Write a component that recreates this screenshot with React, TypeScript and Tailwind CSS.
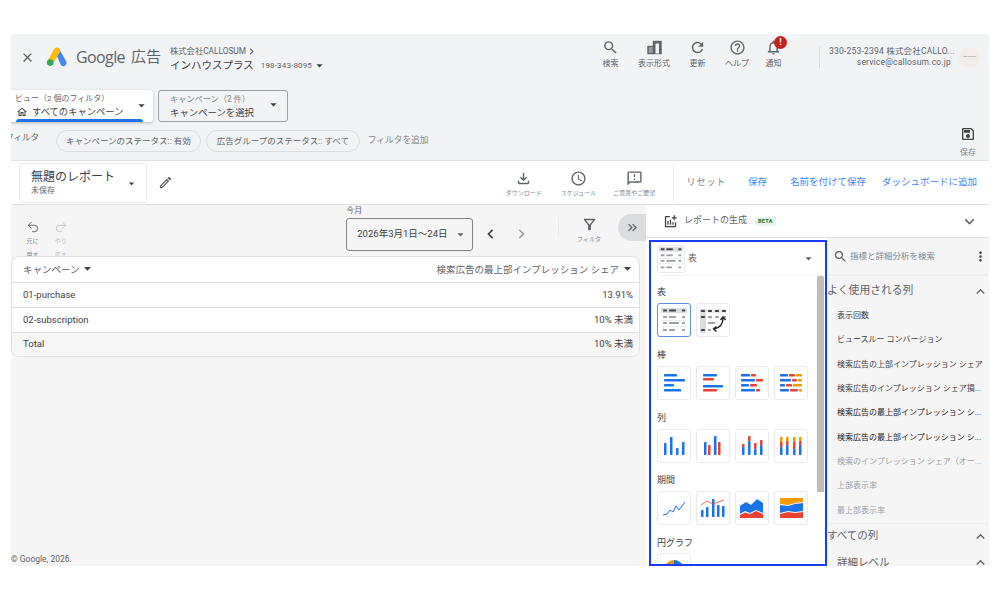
import type { ReactNode } from "react";
import { Undo2, Redo2 } from "lucide-react";
import {
  MdClose,
  MdSearch,
  MdRefresh,
  MdHelpOutline,
  MdOutlineNotifications,
  MdOutlineSave,
  MdArrowDropDown,
  MdOutlineEdit,
  MdOutlineFileDownload,
  MdOutlineSchedule,
  MdOutlineFeedback,
  MdOutlineFilterAlt,
  MdChevronLeft,
  MdChevronRight,
  MdKeyboardDoubleArrowRight,
  MdKeyboardArrowDown,
  MdKeyboardArrowUp,
  MdMoreVert,
  MdOutlineHome,
  MdOutlineAddchart,
} from "react-icons/md";

const B = "#1a73e8";
const R = "#ea4335";
const O = "#f29900";
const G = "#9aa0a6";
const D = "#3c4043";

type Bar = [number, number, number, number, string];

const Logo = () => (
  <svg width="22" height="20" viewBox="0 0 22 20">
    <path d="M8 2.5 L13.5 2.5 L20.5 15 A3.2 3.2 0 0 1 15 18 Z" fill="#4285f4" />
    <path d="M8.2 2 A3.2 3.2 0 0 1 13.8 5 L7 17 L1.6 14 Z" fill="#fbbc04" />
    <circle cx="4.2" cy="15.6" r="3.3" fill="#34a853" />
  </svg>
);

const ViewIcon = () => (
  <svg width="15" height="15" viewBox="0 0 15 15" fill="none" stroke="#5f6368" strokeWidth="1.4">
    <rect x="1" y="6.5" width="5.5" height="7" fill="#9aa0a6" />
    <rect x="6.5" y="1.5" width="7.5" height="12" fill="#5f6368" />
    <rect x="8.5" y="3.5" width="3.5" height="10" fill="#f1f3f4" stroke="none" />
  </svg>
);

const TopAction = ({ icon, label, cls }: { icon: ReactNode; label: string; cls?: string }) => (
  <div className={`flex flex-col items-center text-[8px] leading-[10px] text-[#5f6368] ${cls ?? ""}`}>
    <div className="h-[18px] flex items-center justify-center">{icon}</div>
    <span className="mt-[3px] whitespace-nowrap">{label}</span>
  </div>
);

const TinyAction = ({ icon, label, cls }: { icon: ReactNode; label: string; cls?: string }) => (
  <div className={`flex flex-col items-center text-[6px] leading-[8px] text-[#80868b] ${cls ?? ""}`}>
    <div className="mt-[1px]">{icon}</div>
    <span className="mt-[2px] whitespace-nowrap">{label}</span>
  </div>
);

const Thumb = ({ bars, children, cls }: { bars?: Bar[]; children?: ReactNode; cls?: string }) => (
  <div className={`w-[34px] h-[34px] shrink-0 rounded-[3px] border bg-white ${cls ?? "border-[#e8eaed]"}`}>
    <svg width="32" height="32" viewBox="0 0 32 32">
      {bars?.map((b, i) => (
        <rect key={i} x={b[0]} y={b[1]} width={b[2]} height={b[3]} fill={b[4]} rx="0.4" />
      ))}
      {children}
    </svg>
  </div>
);

const tableBars: Bar[] = [
  [3, 4, 26, 5, "#dadce0"],
  [5, 5.5, 4, 2, D],
  [11, 5.5, 7, 2, D],
  [24, 5.5, 3, 2, D],
  [5, 12, 4, 2, G],
  [11, 12, 7, 2, G],
  [24, 12, 3, 2, G],
  [3, 16, 26, 0.6, "#dadce0"],
  [5, 18, 4, 2, G],
  [11, 18, 10, 2, G],
  [24, 18, 3, 2, G],
  [3, 22, 26, 0.6, "#dadce0"],
  [5, 25, 4, 2, G],
  [11, 25, 6, 2, G],
  [24, 25, 3, 2, G],
];

const pivotBars: Bar[] = [
  [3, 5, 26, 4, "#e8eaed"],
  [3, 5, 6, 24, "#dadce0"],
  [4, 6, 4, 2, D],
  [11, 6, 4, 2, D],
  [18, 6, 4, 2, D],
  [25, 6, 4, 2, D],
  [4, 12, 4, 2, D],
  [11, 12, 4, 2, G],
  [18, 12, 4, 2, G],
  [25, 12, 4, 2, G],
  [11, 18, 7, 2, G],
  [4, 25, 4, 2, D],
  [11, 25, 3, 2, G],
];

const barThumbs: Bar[][] = [
  [
    [6, 7, 13, 2.5, B],
    [6, 12, 21, 2.5, B],
    [6, 17, 10, 2.5, B],
    [6, 22, 17, 2.5, B],
  ],
  [
    [6, 7, 14, 2.5, B],
    [6, 11, 11, 2.5, R],
    [6, 18, 20, 2.5, B],
    [6, 22, 14, 2.5, R],
  ],
  [
    [5, 7, 9, 2.5, B],
    [15, 7, 5, 2.5, R],
    [5, 12, 14, 2.5, B],
    [20, 12, 7, 2.5, R],
    [5, 17, 8, 2.5, B],
    [14, 17, 7, 2.5, R],
    [5, 22, 14, 2.5, B],
    [20, 22, 4, 2.5, R],
  ],
  [
    [5, 7, 8, 2.5, B],
    [14, 7, 6, 2.5, R],
    [21, 7, 6, 2.5, O],
    [5, 12, 11, 2.5, B],
    [17, 12, 5, 2.5, R],
    [23, 12, 4, 2.5, O],
    [5, 17, 5, 2.5, B],
    [11, 17, 6, 2.5, R],
    [18, 17, 9, 2.5, O],
    [5, 22, 9, 2.5, B],
    [15, 22, 8, 2.5, R],
    [24, 22, 3, 2.5, O],
  ],
];

const colThumbs: Bar[][] = [
  [
    [6, 13, 2.5, 12, B],
    [12, 7, 2.5, 18, B],
    [18, 18, 2.5, 7, B],
    [24, 12, 2.5, 13, B],
  ],
  [
    [7, 12, 2.5, 13, B],
    [11, 15, 2.5, 10, R],
    [17, 6, 2.5, 19, B],
    [21, 12, 2.5, 13, R],
  ],
  [
    [6, 17, 2.5, 8, B],
    [6, 14, 2.5, 3, R],
    [12, 11, 2.5, 14, B],
    [12, 6, 2.5, 5, R],
    [18, 19, 2.5, 6, B],
    [18, 13, 2.5, 6, R],
    [24, 15, 2.5, 10, B],
    [24, 10, 2.5, 5, R],
  ],
  [
    [5, 17, 2.5, 8, B],
    [5, 12, 2.5, 5, R],
    [5, 7, 2.5, 5, O],
    [11, 15, 2.5, 10, B],
    [11, 11, 2.5, 4, R],
    [11, 7, 2.5, 4, O],
    [18, 19, 2.5, 6, B],
    [18, 12, 2.5, 7, R],
    [18, 7, 2.5, 5, O],
    [24, 15, 2.5, 10, B],
    [24, 11, 2.5, 4, R],
    [24, 7, 2.5, 4, O],
  ],
];

const SectionLabel = ({ children, cls }: { children: ReactNode; cls?: string }) => (
  <div className={`text-[9px] leading-[12px] text-[#3c4043] ${cls ?? ""}`}>{children}</div>
);

const plainItems = [
  "表示回数",
  "ビュースルー コンバージョン",
  "検索広告の上部インプレッション シェア",
  "検索広告のインプレッション シェア損...",
];
const strongItems = ["検索広告の最上部インプレッション シ...", "検索広告の最上部インプレッション シ..."];
const dimItems = ["検索のインプレッション シェア（オー...", "上部表示率", "最上部表示率"];

export default function App() {
  return (
    <div className="h-[600px] bg-white pt-[34px] pl-[11px] overflow-hidden font-['Roboto','Noto_Sans_CJK_JP',sans-serif]">
      <div className="w-[978px] h-[532px] flex flex-col overflow-hidden">
        {/* top grey area */}
        <div className="h-[127px] bg-[#f1f3f4] shrink-0 flex flex-col border-b border-[#e0e0e0]">
          <div className="h-[46px] shrink-0 flex items-center pl-[9px] pr-[9px]">
            <MdClose size={15} color="#5f6368" />
            <div className="ml-[11px]">
              <Logo />
            </div>
            <span className="ml-[8px] text-[16px] leading-[20px] text-[#5f6368] font-['Open_Sans','Noto_Sans_CJK_JP',sans-serif] tracking-[-0.6px]">Google</span>
            <span className="ml-[6px] text-[15px] leading-[20px] text-[#5f6368]">広告</span>
            <div className="ml-[9px] mt-[4px] text-[#3c4043]">
              <div className="flex items-center text-[8.3px] leading-[11px] text-[#5f6368]">
                株式会社CALLOSUM
                <MdChevronRight size={13} className="ml-[-1px]" />
              </div>
              <div className="flex items-center text-[10.5px] leading-[14px]">
                インハウスプラス
                <span className="ml-[7px] text-[8px] text-[#5f6368] tracking-[0.15px]">198-343-8095</span>
                <MdArrowDropDown size={15} color="#3c4043" />
              </div>
            </div>
            <div className="ml-auto self-start mt-[4px] flex items-start gap-[19px]">
              <TopAction icon={<MdSearch size={17} color="#5f6368" />} label="検索" />
              <TopAction icon={<ViewIcon />} label="表示形式" />
              <TopAction icon={<MdRefresh size={17} color="#5f6368" />} label="更新" />
              <TopAction icon={<MdHelpOutline size={17} color="#5f6368" />} label="ヘルプ" />
              <div className="relative ml-[-3px]">
                <TopAction icon={<MdOutlineNotifications size={17} color="#5f6368" />} label="通知" />
                <span className="absolute left-[9px] top-[-2px] w-[13px] h-[13px] rounded-full bg-[#c5221f] text-white text-[9px] leading-[13px] font-bold text-center">!</span>
              </div>
            </div>
            <div className="ml-[37px] w-px h-[21px] bg-[#dadce0]" />
            <div className="ml-[9px] w-[122px] text-right text-[8.5px] leading-[11px] text-[#5f6368] whitespace-nowrap tracking-[0.2px]">
              <div>330-253-2394 株式会社CALLO...</div>
              <div>service@callosum.co.jp</div>
            </div>
            <div className="ml-[8px] w-[21px] h-[21px] rounded-full bg-[#f3ece8] flex items-center justify-center text-[2.5px] text-[#8a7f78] overflow-hidden">CALLOSUM</div>
          </div>

          <div className="mt-[10px] flex gap-[5px] h-[32px] shrink-0">
            <div className="relative w-[142px] bg-white rounded-r-[3px] shadow-[0_1px_3px_rgba(60,64,67,0.35)] pl-[4px] pt-[3px]">
              <div className="text-[8px] leading-[11px] text-[#5f6368] whitespace-nowrap">ビュー（2 個のフィルタ）</div>
              <div className="flex items-center text-[9.3px] leading-[14px] text-[#3c4043] whitespace-nowrap mt-[1px]">
                <MdOutlineHome size={12} color="#3c4043" className="mr-[4px] ml-[1px]" />
                すべてのキャンペーン
              </div>
              <MdArrowDropDown size={15} color="#3c4043" className="absolute right-[4px] top-[8px]" />
              <span className="absolute left-[5px] bottom-0 w-[127px] h-[3px] rounded-t-[3px] bg-[#1a73e8]" />
            </div>
            <div className="relative w-[130px] rounded-[3px] border border-[#9aa0a6] pl-[11px] pt-[2px]">
              <div className="text-[8.2px] leading-[12px] text-[#80868b] whitespace-nowrap">キャンペーン（2 件）</div>
              <div className="text-[9.4px] leading-[14px] text-[#3c4043] whitespace-nowrap mt-[1px]">キャンペーンを選択</div>
              <MdArrowDropDown size={15} color="#3c4043" className="absolute right-[6px] top-[6px]" />
            </div>
          </div>

          <div className="flex-1 flex items-start pr-[13px] pt-[8px] min-h-0">
            <span className="w-[28px] overflow-hidden whitespace-nowrap text-[8.5px] leading-[14px] text-[#5f6368] [direction:rtl] text-right">フィルタ</span>
            <div className="ml-[17px] h-[22px] px-[9px] rounded-full border border-[#dadce0] flex items-center text-[8.5px] text-[#5f6368] whitespace-nowrap">キャンペーンのステータス:: 有効</div>
            <div className="ml-[5px] h-[22px] w-[154px] justify-center rounded-full border border-[#dadce0] flex items-center text-[8.5px] text-[#5f6368] whitespace-nowrap">広告グループのステータス:: すべて</div>
            <span className="ml-[8px] h-[22px] flex items-center text-[8.7px] text-[#80868b] whitespace-nowrap">フィルタを追加</span>
            <div className="ml-auto -mt-[4px] flex flex-col items-center text-[8px] leading-[10px] text-[#80868b]">
              <MdOutlineSave size={16} color="#3c4043" />
              <span className="mt-[6px]">保存</span>
            </div>
          </div>
        </div>

        {/* report bar */}
        <div className="h-[44px] shrink-0 bg-white border-b border-[#e0e0e0] flex items-center pl-[8px] pr-[12px]">
          <div className="relative w-[128px] h-[40px] rounded-[3px] border border-[#e8eaed] pl-[11px] pt-[5px]">
            <div className="text-[12px] leading-[16px] text-[#3c4043] whitespace-nowrap">無題のレポート</div>
            <div className="text-[8px] leading-[11px] text-[#5f6368]">未保存</div>
            <MdArrowDropDown size={13} color="#3c4043" className="absolute right-[8px] top-[13px]" />
          </div>
          <MdOutlineEdit size={15} color="#5f6368" className="ml-[11px]" />
          <div className="ml-auto flex items-start">
            <TinyAction icon={<MdOutlineFileDownload size={17} color="#5f6368" />} label="ダウンロード" />
            <TinyAction icon={<MdOutlineSchedule size={17} color="#5f6368" />} label="スケジュール" cls="ml-[19px]" />
            <TinyAction icon={<MdOutlineFeedback size={17} color="#5f6368" />} label="ご意見やご要望" cls="ml-[17px]" />
          </div>
          <div className="ml-[18px] w-px h-[36px] bg-[#e8eaed]" />
          <span className="ml-[12px] text-[9.5px] text-[#80868b] tracking-[0.4px] whitespace-nowrap">リセット</span>
          <span className="ml-[22px] text-[9.5px] text-[#4285f4] whitespace-nowrap">保存</span>
          <span className="ml-[23px] text-[9.5px] text-[#4285f4] whitespace-nowrap">名前を付けて保存</span>
          <span className="ml-[16px] text-[9.5px] text-[#4285f4] whitespace-nowrap">ダッシュボードに追加</span>
        </div>

        {/* body */}
        <div className="flex-1 min-h-0 flex">
          <div className="w-[635px] shrink-0 bg-[#f5f5f5] flex flex-col">
            <div className="h-[51px] shrink-0 flex items-start overflow-hidden">
              <div className="ml-[14px] mt-[15px] w-[16px] flex flex-col items-center text-[6px] leading-[14px] text-[#80868b]">
                <Undo2 size={14} color="#5f6368" strokeWidth={1.6} />
                <span className="whitespace-nowrap">元に</span>
                <span className="whitespace-nowrap">戻す</span>
              </div>
              <div className="ml-[13px] mt-[15px] w-[16px] flex flex-col items-center text-[6px] leading-[14px] text-[#bdc1c6]">
                <Redo2 size={14} color="#bdc1c6" strokeWidth={1.6} />
                <span className="whitespace-nowrap">やり</span>
                <span className="whitespace-nowrap">直す</span>
              </div>
              <div className="ml-[278px] mt-[1px]">
                <div className="text-[8px] leading-[10px] text-[#5f6368]">今月</div>
                <div className="mt-[2px] w-[127px] h-[33px] rounded-[3px] border border-[#80868b] flex items-center pl-[10px] pr-[4px] text-[9.5px] text-[#3c4043] whitespace-nowrap">
                  2026年3月1日〜24日
                  <MdArrowDropDown size={15} color="#5f6368" className="ml-auto" />
                </div>
              </div>
              <MdChevronLeft size={20} color="#3c4043" className="ml-[8px] mt-[19px]" />
              <MdChevronRight size={20} color="#9aa0a6" className="ml-[12px] mt-[19px]" />
              <div className="ml-[27px] mt-[12px] w-px h-[20px] bg-[#e8eaed]" />
              <div className="ml-[18px] mt-[11px] flex flex-col items-center text-[6px] leading-[8px] text-[#80868b]">
                <MdOutlineFilterAlt size={17} color="#5f6368" />
                <span className="mt-[2px] whitespace-nowrap">フィルタ</span>
              </div>
              <div className="ml-[17px] mt-[9px] w-[28px] h-[27px] shrink-0 rounded-l-full bg-[#dadce0] flex items-center justify-center">
                <MdKeyboardDoubleArrowRight size={15} color="#5f6368" />
              </div>
            </div>

            <div className="w-[629px] rounded-lg border border-[#e0e0e0] bg-white overflow-hidden text-[9.5px] text-[#3c4043]">
              <div className="h-[26px] pt-[1px] flex items-center justify-between pl-[11px] pr-[3px] border-b border-[#e0e0e0] text-[#5f6368]">
                <span className="flex items-center text-[9.5px]">
                  キャンペーン
                  <MdArrowDropDown size={17} color="#3c4043" className="-mt-[4px] -ml-[1px]" />
                </span>
                <span className="flex items-center text-[9.5px]">
                  検索広告の最上部インプレッション シェア
                  <MdArrowDropDown size={17} color="#3c4043" className="-mt-[4px]" />
                </span>
              </div>
              <div className="h-[25px] flex items-center justify-between px-[11px] pr-[6px] border-b border-[#e0e0e0]">
                <span>01-purchase</span>
                <span>13.91%</span>
              </div>
              <div className="h-[25px] flex items-center justify-between px-[11px] pr-[6px] border-b border-[#e0e0e0]">
                <span>02-subscription</span>
                <span>10% 未満</span>
              </div>
              <div className="h-[23px] flex items-center justify-between px-[11px] pr-[6px] bg-[#f7f7f7]">
                <span>Total</span>
                <span>10% 未満</span>
              </div>
            </div>

            <div className="mt-auto pb-[1px] text-[8.5px] leading-[12px] text-[#5f6368]">© Google, 2026.</div>
          </div>

          <div className="flex-1 min-w-0 flex flex-col bg-white">
            <div className="h-[33px] shrink-0 flex items-center border-b border-[#e0e0e0] pl-[17px] pr-[10px]">
              <MdOutlineAddchart size={15} color="#3c4043" />
              <span className="ml-[6px] text-[9px] text-[#5f6368] whitespace-nowrap">レポートの生成</span>
              <span className="ml-[8px] px-[3px] rounded-[2px] bg-[#e6f4ea] text-[5.5px] leading-[9px] font-bold text-[#137333] tracking-[0.3px]">BETA</span>
              <MdKeyboardArrowDown size={19} color="#5f6368" className="ml-auto" />
            </div>

            <div className="flex-1 min-h-0 flex overflow-hidden">
              <div className="ml-[3px] mt-[2px] w-[178px] h-[326px] shrink-0 border-2 border-[#1a3cf5] flex flex-col overflow-hidden">
                <div className="h-[34px] shrink-0 flex items-center pl-[6px] pr-[9px] border-b border-[#f1f3f4]">
                  <div className="w-[28px] h-[28px] border border-[#e8eaed] rounded-[2px] overflow-hidden">
                    <svg width="26" height="26" viewBox="2 3 28 28">
                      {tableBars.map((b, i) => (
                        <rect key={i} x={b[0]} y={b[1]} width={b[2]} height={b[3]} fill={b[4]} />
                      ))}
                    </svg>
                  </div>
                  <span className="ml-[3px] text-[9px] text-[#5f6368]">表</span>
                  <MdArrowDropDown size={15} color="#5f6368" className="ml-auto" />
                </div>
                <div className="flex-1 min-h-0 flex">
                  <div className="flex-1 min-w-0 pl-[6px] pt-[10px] overflow-hidden">
                    <SectionLabel>表</SectionLabel>
                    <div className="mt-[5px] flex gap-[5px]">
                      <Thumb bars={tableBars} cls="border-[#5a8fe6] border-[1.5px] bg-[#f1f3f4]" />
                      <Thumb bars={pivotBars}>
                        <path d="M26 14 C26 21 22 24 17 25" fill="none" stroke="#202124" strokeWidth="1.4" />
                        <path d="M23.5 16 L26 13 L28.5 16 M19.5 22.5 L16.5 25 L19.5 27.5" fill="none" stroke="#202124" strokeWidth="1.4" />
                      </Thumb>
                    </div>
                    <SectionLabel cls="mt-[12px]">棒</SectionLabel>
                    <div className="mt-[5px] flex gap-[5px]">
                      {barThumbs.map((b, i) => (
                        <Thumb key={i} bars={b} />
                      ))}
                    </div>
                    <SectionLabel cls="mt-[12px]">列</SectionLabel>
                    <div className="mt-[5px] flex gap-[5px]">
                      {colThumbs.map((b, i) => (
                        <Thumb key={i} bars={b} />
                      ))}
                    </div>
                    <SectionLabel cls="mt-[11px]">期間</SectionLabel>
                    <div className="mt-[5px] flex gap-[5px]">
                      <Thumb>
                        <path d="M5 23 L9 22 L12 18 L15 20 L18 14 L21 18 L24 14 L27 10" fill="none" stroke={B} strokeWidth="1" />
                      </Thumb>
                      <Thumb
                        bars={[
                          [4, 18, 2.5, 7, B],
                          [9, 15, 2.5, 10, B],
                          [15, 7, 2.5, 18, B],
                          [20, 13, 2.5, 12, B],
                          [25, 14, 2.5, 11, B],
                        ]}
                      >
                        <path d="M4 13 L10 9 L16 12 L21 10 L27 8" fill="none" stroke={R} strokeWidth="0.8" />
                      </Thumb>
                      <Thumb>
                        <path d="M4 14 L10 10 L15 13 L21 7 L27 11 L27 21 L20 18 L14 21 L9 19 L4 22 Z" fill={B} />
                        <path d="M4 23 L9 20.5 L14 22 L20 19 L27 22 L27 26 L4 26 Z" fill={R} />
                      </Thumb>
                      <Thumb>
                        <path d="M5 6 L28 6 L28 10 L20 11 L13 13 L5 12 Z" fill={O} />
                        <path d="M5 13 L13 14 L20 12 L28 11 L28 19 L20 20 L13 19 L5 21 Z" fill={B} />
                        <path d="M5 22 L13 20 L20 21 L28 20 L28 26 L5 26 Z" fill={R} />
                      </Thumb>
                    </div>
                    <SectionLabel cls="mt-[12px]">円グラフ</SectionLabel>
                    <div className="mt-[4px]">
                      <Thumb>
                        <circle cx="16" cy="16" r="10" fill={O} />
                        <path d="M16 6 A10 10 0 0 1 26 16 L16 16 Z" fill={B} />
                      </Thumb>
                    </div>
                  </div>
                  <div className="w-[7px] mr-[1px] shrink-0">
                    <div className="h-[216px] bg-[#bdbdbd] rounded-t-[2px]" />
                  </div>
                </div>
              </div>

              <div className="flex-1 min-w-0 bg-[#f5f5f5] text-[#3c4043]">
                <div className="h-[38px] flex items-center pl-[6px] pr-[1px] border-b-2 border-[#eeeeee]">
                  <MdSearch size={15} color="#5f6368" />
                  <span className="ml-[2px] text-[8.5px] text-[#80868b] whitespace-nowrap">指標と詳細分析を検索</span>
                  <MdMoreVert size={15} color="#3c4043" className="ml-auto" />
                </div>
                <div className="h-[26px] flex items-center justify-between text-[10.8px] text-[#5f6368] whitespace-nowrap mt-[2px]">
                  よく使用される列
                  <MdKeyboardArrowUp size={17} color="#5f6368" />
                </div>
                <div>
                  {plainItems.map((t) => (
                    <div key={t} className="h-[24.3px] pl-[10px] flex items-center text-[8px] text-[#3c4043] whitespace-nowrap">{t}</div>
                  ))}
                  {strongItems.map((t, i) => (
                    <div key={i} className="h-[24.3px] pl-[10px] flex items-center text-[8px] text-[#202124] whitespace-nowrap">{t}</div>
                  ))}
                  {dimItems.map((t) => (
                    <div key={t} className="h-[24.3px] pl-[10px] flex items-center text-[8px] text-[#9aa0a6] whitespace-nowrap">{t}</div>
                  ))}
                </div>
                <div className="border-t border-[#e8eaed] h-[26px] flex items-center justify-between text-[10.5px] text-[#5f6368] whitespace-nowrap">
                  すべての列
                  <MdKeyboardArrowUp size={17} color="#5f6368" />
                </div>
                <div className="h-[28px] flex items-center justify-between pl-[10px] text-[10.5px] text-[#5f6368] whitespace-nowrap">
                  詳細レベル
                  <MdKeyboardArrowUp size={17} color="#5f6368" />
                </div>
              </div>
            </div>
          </div>
        </div>
      </div>
    </div>
  );
}
